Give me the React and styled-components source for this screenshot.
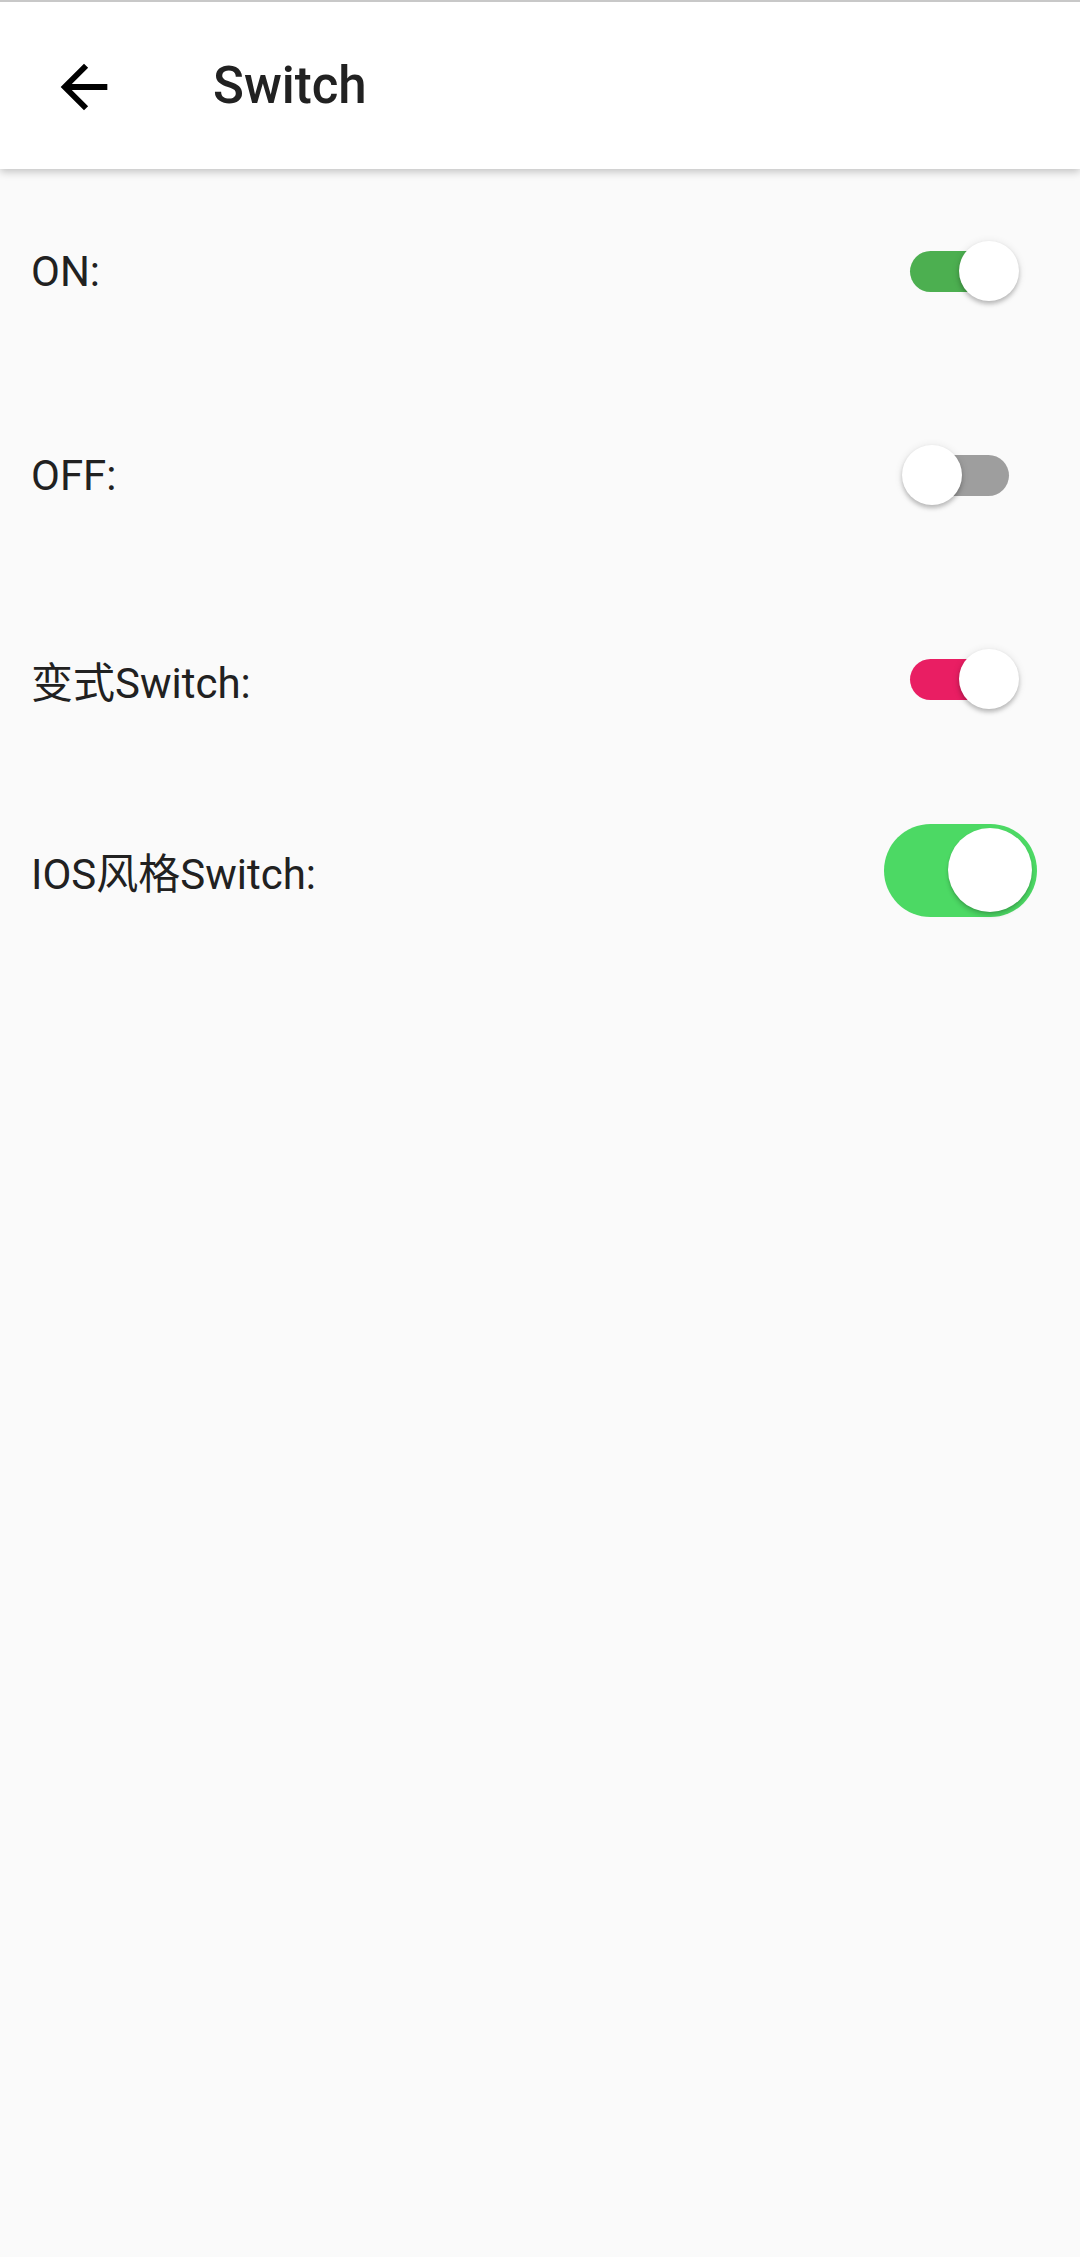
import React from "react";
import styled, { createGlobalStyle } from "styled-components";

const GlobalStyle = createGlobalStyle`
  html, body {
    margin: 0;
    padding: 0;
    background: #fafafa;
  }
  body {
    font-family: Roboto, "Noto Sans CJK SC", sans-serif;
    color: #212121;
  }
`;

const rows = [
  { label: "ON:", kind: "material", on: true, color: "#4caf50", height: 204 },
  { label: "OFF:", kind: "material", on: false, color: "#9e9e9e", height: 204 },
  { label: "变式Switch:", kind: "material", on: true, color: "#e91e63", height: 204 },
  { label: "IOS风格Switch:", kind: "ios", on: true, color: "#4cd964", height: 178 },
];

function App() {
  return (
    <Page>
      <GlobalStyle />
      <AppBar>
        <BackButton aria-label="back">
          <svg width="70" height="70" viewBox="0 0 24 24">
            <path
              d="M20 11H7.83l5.59-5.59L12 4l-8 8 8 8 1.41-1.41L7.83 13H20v-2z"
              fill="#000"
            />
          </svg>
        </BackButton>
        <Title>Switch</Title>
      </AppBar>
      <Content>
        {rows.map((row) => (
          <Row key={row.label} $height={row.height}>
            <Label>{row.label}</Label>
            {row.kind === "material" ? (
              <MaterialSwitch>
                <Track $color={row.color} />
                <Thumb $on={row.on} />
              </MaterialSwitch>
            ) : (
              <IosSwitch $color={row.color}>
                <IosThumb />
              </IosSwitch>
            )}
          </Row>
        ))}
      </Content>
    </Page>
  );
}

export default App;

const Page = styled.div`
  min-height: 2257px;
  background: #fafafa;
`;

const AppBar = styled.header`
  height: 167px;
  border-top: 2px solid #c8c8c8;
  background: #fff;
  display: flex;
  align-items: center;
  box-shadow: 0 3px 8px rgba(0, 0, 0, 0.22);
  position: relative;
  z-index: 1;
`;

const BackButton = styled.div`
  width: 70px;
  height: 70px;
  margin-left: 49px;
  margin-top: 3px;
  display: flex;
  svg {
    display: block;
  }
`;

const Title = styled.h1`
  margin: 0 0 0 94px;
  font-size: 51px;
  font-weight: 500;
  color: #212121;
`;

const Content = styled.main`
  display: flex;
  flex-direction: column;
`;

const Row = styled.div`
  height: ${(p) => p.$height}px;
  display: flex;
  align-items: center;
  justify-content: space-between;
  padding: 0 43px 0 31px;
`;

const Label = styled.span`
  font-size: 42px;
  color: #212121;
`;

const MaterialSwitch = styled.div`
  width: 118px;
  height: 60px;
  margin-right: 18px;
  display: flex;
  align-items: center;
  position: relative;
`;

const Track = styled.div`
  width: 99px;
  height: 41px;
  margin-left: 9px;
  border-radius: 21px;
  background: ${(p) => p.$color};
`;

const Thumb = styled.div`
  position: absolute;
  top: 0;
  left: ${(p) => (p.$on ? 58 : 1)}px;
  width: 60px;
  height: 60px;
  border-radius: 50%;
  background: #fff;
  box-shadow: 0 3px 4px rgba(0, 0, 0, 0.22), 0 1px 8px rgba(0, 0, 0, 0.1);
`;

const IosSwitch = styled.div`
  width: 153px;
  height: 93px;
  border-radius: 47px;
  background: ${(p) => p.$color};
  display: flex;
  align-items: center;
  justify-content: flex-end;
  padding-right: 5px;
  box-sizing: border-box;
`;

const IosThumb = styled.div`
  width: 84px;
  height: 84px;
  border-radius: 50%;
  background: #fff;
  box-shadow: 0 4px 4px rgba(0, 0, 0, 0.16), 0 1px 2px rgba(0, 0, 0, 0.12);
`;
